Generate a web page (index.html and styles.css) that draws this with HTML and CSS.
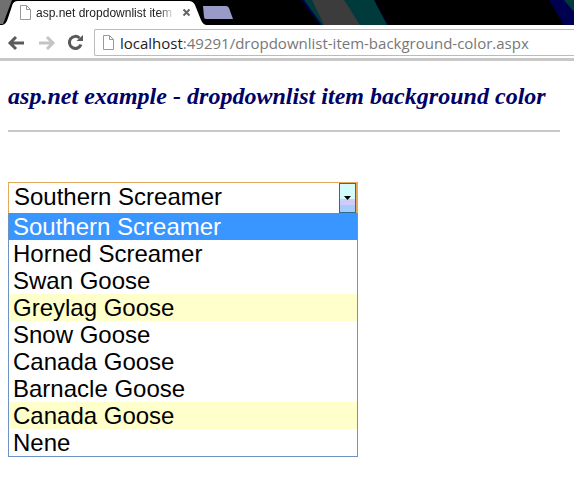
FILE: index.html
```html
<!DOCTYPE html>
<html lang="en">
<head>
<meta charset="utf-8">
<title>asp.net example</title>
<link rel="stylesheet" href="styles.css">
</head>
<body>
<header class="chrome">
  <div class="tabstrip">
    <svg class="tabstrip-art" width="574" height="25" viewBox="0 0 574 25">
      <path d="M0 0H12L3 24H0Z" fill="#707070"/>
      <path d="M301 0H374L388 25H320Z" fill="#000050"/>
      <path d="M304 0H374L387 25H322Z" fill="#003a3a"/>
      <path d="M312 0H344L360 25H324Z" fill="#3c3c3c"/>
      <path d="M549 0H574V25H564Z" fill="#000050"/>
      <path d="M564 0H574V12Z" fill="#003a3a"/>
      <path d="M203 6H226Q228 6 229 8L233 19H206Q204 19 204 17Z" fill="#9a9ac8"/>
      <path d="M2 25Q6 25 8 18L12 6Q13 1 18 1H189Q193 1 195 5L201 20Q203 25 207 25Z" fill="#fff"/>
    </svg>
    <div class="tab">
      <svg class="page-icon" width="12" height="15" viewBox="0 0 12 15"><path d="M1.500.5H7.500L11.500 4.500V14.500H1.500ZM7.500.5V4.500H11.500" fill="#fff" stroke="#999"/></svg>
      <span class="tab-title">asp.net dropdownlist item</span>
      <svg class="tab-close" width="9" height="9" viewBox="0 0 9 9"><path d="M1.500 1.500L7.500 7.500M7.500 1.500L1.500 7.500" stroke="#666" stroke-width="2"/></svg>
    </div>
  </div>
  <div class="toolbar">
    <svg class="nav-icon nav-back" width="18" height="16" viewBox="0 0 18 16"><path d="M17 8H4M9 2L3 8L9 14" fill="none" stroke="#5a5a5a" stroke-width="3"/></svg>
    <svg class="nav-icon" width="18" height="16" viewBox="0 0 18 16"><path d="M1 8H14M9 2L15 8L9 14" fill="none" stroke="#c4c4c4" stroke-width="3"/></svg>
    <svg class="nav-icon" width="17" height="17" viewBox="0 0 17 17"><path d="M14 10.500A6 6 0 1 1 12.500 4" fill="none" stroke="#5a5a5a" stroke-width="3"/><path d="M9.500 7H16V1Z" fill="#5a5a5a"/></svg>
    <div class="omnibox">
      <svg class="page-icon" width="12" height="15" viewBox="0 0 12 15"><path d="M1.500.5H7.500L11.500 4.500V14.500H1.500ZM7.500.5V4.500H11.500" fill="#fff" stroke="#999"/></svg>
      <span class="url"><span class="url-host">localhost</span>:49291/dropdownlist-item-background-color.aspx</span>
    </div>
  </div>
</header>
<main class="page">
  <h2 class="heading">asp.net example - dropdownlist item background color</h2>
  <hr class="rule">
  <div class="dropdown">
    <div class="select">
      <span class="select-value">Southern Screamer</span>
      <span class="select-btn"><svg width="7" height="4" viewBox="0 0 7 4"><path d="M0 0H7L3.500 4Z" fill="#000"/></svg></span>
    </div>
    <ul class="list">
      <li class="item selected">Southern Screamer</li>
      <li class="item">Horned Screamer</li>
      <li class="item">Swan Goose</li>
      <li class="item marked">Greylag Goose</li>
      <li class="item">Snow Goose</li>
      <li class="item">Canada Goose</li>
      <li class="item">Barnacle Goose</li>
      <li class="item marked">Canada Goose</li>
      <li class="item">Nene</li>
    </ul>
  </div>
</main>
</body>
</html>
```
FILE: styles.css
```css
* { box-sizing: border-box; }
html, body { margin: 0; padding: 0; }
body { width: 574px; height: 498px; overflow: hidden; background: #fff; font-family: "Liberation Sans", Arial, sans-serif; }
.chrome { height: 61px; }
.tabstrip { position: relative; height: 25px; background: #000; }
.tabstrip-art { position: absolute; left: 0; top: 0; }
.tab { position: relative; display: flex; align-items: center; height: 25px; padding: 0 0 0 19px; width: 200px; }
.tab-title { margin-left: 5px; width: 139px; overflow: hidden; white-space: nowrap; font-size: 12px; color: #222; -webkit-mask-image: linear-gradient(90deg, #000 88%, transparent); mask-image: linear-gradient(90deg, #000 88%, transparent); }
.tab-close { margin-left: 7px; }
.toolbar { display: flex; align-items: center; height: 36px; padding: 4px 0 2px 7px; background: #fff; border-bottom: 3px solid #c8c8c8; }
.nav-icon { margin-right: 11px; flex: none; }
.nav-back { margin-right: 13px; }
.omnibox { display: flex; align-items: center; flex: 1; height: 27px; margin-left: -1px; padding-left: 7px; border: 1px solid #bbb; border-right: 0; border-radius: 2px 0 0 2px; }
.url { margin-left: 6px; font: 15px "Open Sans", sans-serif; color: #777; white-space: nowrap; }
.url-host { color: #222; }
.page { padding: 0 14px 0 8px; }
.heading { margin: 21px 0 0; font: italic bold 24px/28px "Liberation Serif", serif; letter-spacing: .02px; color: #000066; white-space: nowrap; }
.rule { height: 2px; margin: 20px 0 0; border: 0; background: #c8c8c8; }
.dropdown { width: 350px; margin-top: 50px; }
.select { display: flex; align-items: center; justify-content: space-between; height: 31px; padding: 0 0 0 5px; border: 1px solid #e4a95c; border-width: 1px 2px 0 1px; font-size: 24px; color: #000; }
.select-value { margin-bottom: 2px; line-height: 28px; }
.select-btn { display: flex; align-items: center; justify-content: center; width: 17px; height: 30px; border: 1px solid #2f6a94; background: linear-gradient(#d4fbfc 55%, #d0ccfa 55%, #d0ccfa 75%, #a4ccfc 75%); }
.list { margin: 0; padding: 0; list-style: none; border: 1px solid #6d93c4; border-top: 0; }
.item { height: 27px; padding-left: 4px; font-size: 24px; line-height: 27px; color: #000; white-space: nowrap; }
.selected { background: #3995ff; color: #fff; }
.marked { background: #ffffcc; }
```
